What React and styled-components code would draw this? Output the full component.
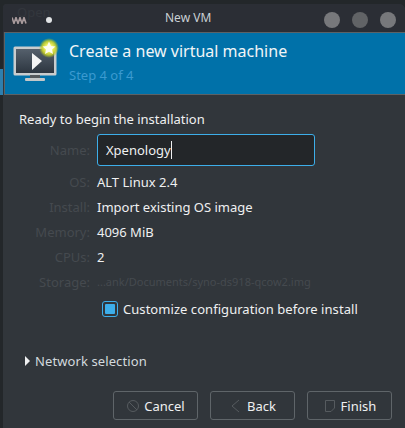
import styled, { createGlobalStyle } from "styled-components";

const GlobalStyle = createGlobalStyle`
  html, body {
    margin: 0;
    padding: 0;
    background: #23272a;
  }
  body {
    font-family: "Noto Sans", "Open Sans", sans-serif;
    width: 405px;
    height: 428px;
    overflow: hidden;
  }
`;

const Desktop = styled.div`
  width: 405px;
  height: 428px;
  padding: 4px 0 0 3px;
  box-sizing: border-box;
  position: relative;
  overflow: hidden;
`;

const BehindText = styled.span`
  position: absolute;
  top: 3px;
  left: 17px;
  font-size: 13px;
  color: #33373d;
  z-index: 1;
`;

const EdgeTab = styled.span`
  position: absolute;
  left: 0;
  top: 69px;
  width: 3px;
  height: 26px;
  background: #2f7fae;
`;

const Window = styled.div`
  position: relative;
  height: 424px;
  background: #31363b;
  border-top-left-radius: 4px;
  border-top-right-radius: 6px;
  display: flex;
  flex-direction: column;
`;

const TitleBar = styled.div`
  height: 28px;
  padding: 0 9px 0 9px;
  background: #2b2e35;
  border-radius: 4px 6px 0 0;
  display: flex;
  align-items: center;
  color: #c9d0d4;
  font-size: 12px;
  position: relative;
`;

const AppGlyph = styled.svg`
  width: 15px;
  height: 7px;
  margin-top: 4px;
`;

const PinDot = styled.span`
  width: 6px;
  height: 6px;
  border-radius: 50%;
  background: #e2e4e6;
  margin: 3px 0 0 18px;
  transform: translateX(1px);
`;

const TitleText = styled.span`
  position: absolute;
  left: 162px;
  top: 5px;
`;

const Controls = styled.div`
  margin-left: auto;
  display: flex;
  gap: 12px;
  margin-top: 3px;
`;

const Control = styled.span`
  width: 16px;
  height: 16px;
  border-radius: 50%;
  background: ${(props) => props.color};
`;

const Banner = styled.div`
  height: 61px;
  margin-left: 1px;
  background: #0071a9;
  border: 1px solid #5c6266;
  border-width: 1px 0 1px 1px;
  box-sizing: content-box;
  display: flex;
  align-items: flex-start;
  color: #f1f5f7;
`;

const BannerIcon = styled.svg`
  width: 48px;
  height: 48px;
  margin: 10px 0 0 8px;
  flex: none;
  overflow: visible;
`;

const BannerText = styled.div`
  margin-left: 8px;
  padding-top: 7px;
`;

const BannerTitle = styled.div`
  font-size: 16px;
  line-height: 22px;
`;

const BannerStep = styled.div`
  font-size: 13px;
  line-height: 18px;
  margin-top: 4px;
  color: #3b9ad0;
`;

const Content = styled.div`
  flex: 1;
  padding: 15px 0 0 16px;
  color: #eff0f1;
  font-size: 13px;
`;

const Heading = styled.div`
  line-height: 18px;
  margin-bottom: 6px;
`;

const FormGrid = styled.div`
  display: grid;
  grid-template-columns: 71px 1fr;
  grid-template-rows: 35px;
  column-gap: 7px;
  grid-auto-rows: 25px;
  align-items: center;
  line-height: 18px;
`;

const Label = styled.span`
  text-align: right;
  color: #454a4f;
`;

const NameInput = styled.div`
  width: 218px;
  height: 32px;
  box-sizing: border-box;
  border: 1px solid #3daee9;
  border-radius: 3px;
  background: #232629;
  padding-left: 8px;
  display: flex;
  align-items: center;
  align-self: start;
`;

const Caret = styled.span`
  width: 1px;
  height: 18px;
  background: #eff0f1;
`;

const NameLabel = styled(Label)`
  align-self: start;
  line-height: 32px;
`;

const StoragePath = styled.span`
  color: #454a4f;
  font-size: 11px;
`;

const CheckRow = styled.div`
  display: flex;
  align-items: center;
  gap: 5px;
  margin: 6px 0 0 83px;
  line-height: 18px;
  letter-spacing: 0.05px;
`;

const CheckBox = styled.span`
  width: 16px;
  height: 16px;
  box-sizing: border-box;
  border: 1px solid #3daee9;
  border-radius: 3px;
  background: #31363b;
  padding: 2px;
  display: flex;
`;

const CheckFill = styled.span`
  flex: 1;
  background: #3daee9;
  border-radius: 1px;
`;

const Expander = styled.div`
  display: flex;
  align-items: center;
  gap: 5px;
  margin: 34px 0 0 6px;
  line-height: 18px;
  letter-spacing: 0.1px;
  color: #d3dade;
`;

const Arrow = styled.span`
  width: 0;
  height: 0;
  border-left: 5px solid #eff0f1;
  border-top: 5px solid transparent;
  border-bottom: 5px solid transparent;
`;

const Footer = styled.div`
  display: flex;
  gap: 12px;
  margin: 21px 0 0 94px;
`;

const Button = styled.div`
  width: 85px;
  height: 29px;
  box-sizing: border-box;
  border: 1px solid #5f6569;
  border-radius: 3px;
  display: flex;
  align-items: center;
  justify-content: center;
  gap: 4px;
  color: #eff0f1;
  font-size: 13px;
`;

const ButtonIcon = styled.svg`
  width: 14px;
  height: 14px;
  flex: none;
`;

function MonitorIcon() {
  return (
    <BannerIcon viewBox="0 0 48 48">
      <defs>
        <linearGradient id="screen" x1="0" y1="0" x2="0" y2="1">
          <stop offset="0" stopColor="#55606c" />
          <stop offset="1" stopColor="#2d3640" />
        </linearGradient>
        <radialGradient id="glow">
          <stop offset="0.35" stopColor="#f4f56a" />
          <stop offset="0.7" stopColor="#c6cf2a" stopOpacity="0.9" />
          <stop offset="1" stopColor="#a8c020" stopOpacity="0" />
        </radialGradient>
      </defs>
      <rect x="0.5" y="3.5" width="43" height="29" rx="1.5" fill="#c9cccd" />
      <rect x="3" y="6" width="38" height="24" fill="url(#screen)" />
      <rect x="17" y="32" width="10" height="3" fill="#55595c" />
      <rect x="12" y="35" width="20" height="3" rx="1" fill="#c4c7c8" />
      <path d="M19 10 L29 18 L19 27 Z" fill="#f4f5f5" />
      <circle cx="36" cy="5" r="10" fill="url(#glow)" />
      <path
        d="M36 -1.5 L38 3 L42.5 3.5 L39 6.5 L40 11 L36 8.7 L32 11 L33 6.5 L29.5 3.5 L34 3 Z"
        fill="#fdfdf0"
      />
    </BannerIcon>
  );
}

export default function App() {
  return (
    <>
      <GlobalStyle />
      <Desktop>
        <BehindText>Open</BehindText>
        <EdgeTab />
        <Window>
          <TitleBar>
            <AppGlyph viewBox="0 0 15 7">
              <path d="M0 0.5 L2 6.5 L4 0.5 L6 6.5 L8 0.5 L10 6.5 L12 0.5 L14 6.5" fill="none" stroke="#a89a9c" strokeWidth="1.6" />
            </AppGlyph>
            <PinDot />
            <TitleText>New VM</TitleText>
            <Controls>
              <Control color="#77787b" />
              <Control color="#616366" />
              <Control color="#77787b" />
            </Controls>
          </TitleBar>
          <Banner>
            <MonitorIcon />
            <BannerText>
              <BannerTitle>Create a new virtual machine</BannerTitle>
              <BannerStep>Step 4 of 4</BannerStep>
            </BannerText>
          </Banner>
          <Content>
            <Heading>Ready to begin the installation</Heading>
            <FormGrid>
              <NameLabel>Name:</NameLabel>
              <NameInput>
                Xpenology
                <Caret />
              </NameInput>
              <Label>OS:</Label>
              <span>ALT Linux 2.4</span>
              <Label>Install:</Label>
              <span>Import existing OS image</span>
              <Label>Memory:</Label>
              <span>4096 MiB</span>
              <Label>CPUs:</Label>
              <span>2</span>
              <Label>Storage:</Label>
              <StoragePath>...ank/Documents/syno-ds918-qcow2.img</StoragePath>
            </FormGrid>
            <CheckRow>
              <CheckBox>
                <CheckFill />
              </CheckBox>
              Customize configuration before install
            </CheckRow>
            <Expander>
              <Arrow />
              Network selection
            </Expander>
            <Footer>
              <Button>
                <ButtonIcon viewBox="0 0 14 14" fill="none" stroke="#565b5f" strokeWidth="1">
                  <circle cx="7" cy="7" r="5.5" />
                  <path d="M3 3 L11 11" />
                </ButtonIcon>
                Cancel
              </Button>
              <Button>
                <ButtonIcon viewBox="0 0 14 14" fill="none" stroke="#565b5f" strokeWidth="1">
                  <path d="M10 1 L3 7 L10 13" />
                </ButtonIcon>
                Back
              </Button>
              <Button>
                <ButtonIcon viewBox="0 0 14 14" fill="none" stroke="#565b5f" strokeWidth="1">
                  <path d="M2.5 1.5 H11.5 V9 L8 12.5 H2.5 Z" />
                </ButtonIcon>
                Finish
              </Button>
            </Footer>
          </Content>
        </Window>
      </Desktop>
    </>
  );
}
